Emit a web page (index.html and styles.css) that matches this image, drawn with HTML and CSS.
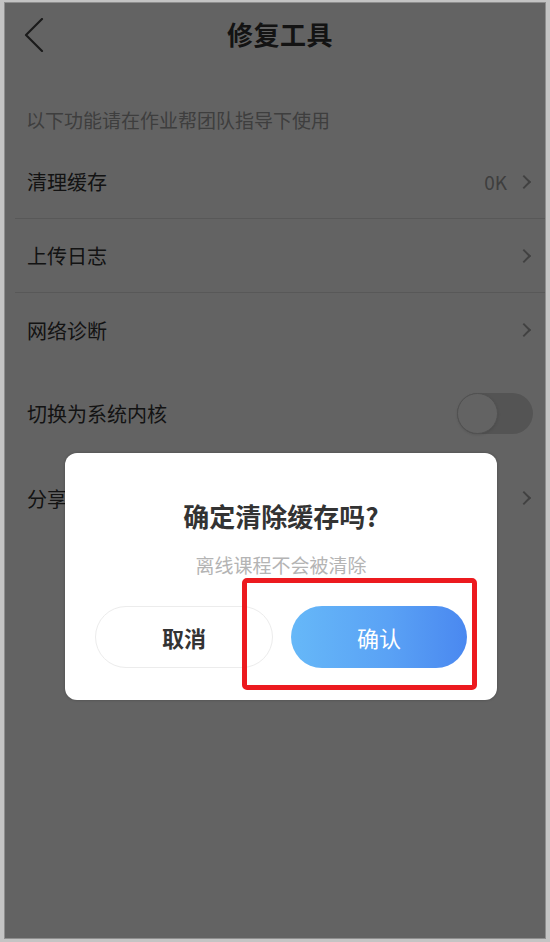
FILE: index.html
```html
<!DOCTYPE html>
<html lang="zh-CN">
<head>
<meta charset="utf-8">
<title>修复工具</title>
<link rel="stylesheet" href="styles.css">
</head>
<body>
<div class="device">
  <header class="nav">
    <svg class="back" width="20" height="34" viewBox="0 0 20 34" aria-hidden="true">
      <polyline points="18,1 2,17 18,33" fill="none" stroke="#444" stroke-width="2.2" stroke-linecap="round" stroke-linejoin="round"/>
    </svg>
    <h1 class="nav-title">修复工具</h1>
    <span></span>
  </header>

  <div class="hint">以下功能请在作业帮团队指导下使用</div>

  <ul class="group">
    <li class="row line">
      <span class="label">清理缓存</span>
      <span class="extra"><span class="value">0K</span><span class="chev"></span></span>
    </li>
    <li class="row line">
      <span class="label">上传日志</span>
      <span class="extra"><span class="chev"></span></span>
    </li>
    <li class="row">
      <span class="label">网络诊断</span>
      <span class="extra"><span class="chev"></span></span>
    </li>
  </ul>

  <ul class="group group2">
    <li class="row tall">
      <span class="label">切换为系统内核</span>
      <span class="switch"><span class="knob"></span></span>
    </li>
    <li class="row tall2">
      <span class="label">分享日志</span>
      <span class="extra"><span class="chev"></span></span>
    </li>
  </ul>

  <div class="mask"></div>

  <div class="dialog">
    <div class="d-title">确定清除缓存吗?</div>
    <div class="d-sub">离线课程不会被清除</div>
    <div class="d-actions">
      <button class="btn btn-cancel">取消</button>
      <button class="btn btn-ok">确认</button>
    </div>
    <div class="highlight"></div>
  </div>
</div>
</body>
</html>
```

FILE: styles.css
```css
* { box-sizing: border-box; }

html, body {
  margin: 0;
  padding: 0;
}

body {
  background: #c4c4c4;
  font-family: "Noto Sans CJK SC", "Noto Sans", "Liberation Sans", sans-serif;
  width: 550px;
  height: 942px;
  overflow: hidden;
}

.device {
  position: relative;
  margin: 2px 0 0 4px;
  width: 542px;
  height: 937px;
  background: #ffffff;
  border: 1px solid #8e8e8e;
  overflow: hidden;
}

/* ---------- nav ---------- */
.nav {
  height: 61px;
  display: grid;
  grid-template-columns: 60px 1fr 50px;
  align-items: center;
  background: #fff;
}

.back {
  display: block;
  margin-left: 19px;
  margin-top: 2px;
}

.nav-title {
  margin: 0;
  text-align: center;
  font-size: 26px;
  font-weight: 700;
  color: #333;
  letter-spacing: 0.5px;
}

/* ---------- hint ---------- */
.hint {
  height: 81px;
  padding: 44px 0 0 21px;
  font-size: 19px;
  line-height: 24px;
  color: #a0a0a0;
  background: #fff;
}

/* ---------- list ---------- */
.group {
  list-style: none;
  margin: 0;
  padding: 0;
}

.group2 {
  margin-top: 8px;
}

.row {
  height: 74px;
  margin-left: 10px;
  padding: 0 12px 0 12px;
  display: flex;
  align-items: center;
  justify-content: space-between;
}

.row.line {
  border-bottom: 1px solid #e2e2e2;
}

.row.tall {
  height: 76px;
}

.row.tall2 {
  height: 94px;
}

.label {
  font-size: 20px;
  color: #333;
}

.extra {
  display: flex;
  align-items: center;
  gap: 12px;
}

.value {
  font-size: 19px;
  color: #a0a0a0;
}

.chev {
  width: 10px;
  height: 10px;
  border-top: 2px solid #a8a8a8;
  border-right: 2px solid #a8a8a8;
  transform: rotate(45deg);
  margin-right: 4px;
}

.switch {
  width: 76px;
  height: 41px;
  border-radius: 21px;
  background: #d8d8d8;
  display: flex;
  align-items: center;
}

.knob {
  width: 41px;
  height: 41px;
  border-radius: 50%;
  background: #fff;
  border: 1px solid #d0d0d0;
  box-shadow: 0 1px 3px rgba(0, 0, 0, 0.12);
}

/* ---------- mask ---------- */
.mask {
  position: absolute;
  inset: 0;
  background: rgba(0, 0, 0, 0.61);
}

/* ---------- dialog ---------- */
.dialog {
  position: absolute;
  left: 60px;
  top: 450px;
  width: 432px;
  height: 247px;
  padding: 46px 30px 31px;
  background: #fff;
  border-radius: 12px;
  box-shadow: 0 0 3px rgba(0, 0, 0, 0.25);
  display: flex;
  flex-direction: column;
  align-items: center;
}

.d-title {
  font-size: 26px;
  line-height: 34px;
  font-weight: 700;
  color: #333;
}

.d-sub {
  margin-top: 18px;
  font-size: 19px;
  line-height: 28px;
  color: #b4b4b4;
}

.d-actions {
  margin-top: 27px;
  width: 100%;
  display: flex;
  gap: 18px;
}

.btn {
  flex: 1;
  height: 62px;
  border-radius: 31px;
  font-family: inherit;
  font-size: 22px;
  font-weight: 700;
  cursor: pointer;
}

.btn-cancel {
  background: #fff;
  border: 1px solid #ececec;
  color: #333;
}

.btn-ok {
  border: none;
  color: #fff;
  font-weight: 400;
  background: linear-gradient(90deg, #66b8f8 0%, #5aa2f5 55%, #4a88f0 100%);
}

.highlight {
  position: absolute;
  left: 177px;
  top: 125px;
  width: 235px;
  height: 112px;
  border: 5px solid #ec1a1f;
  border-radius: 5px;
  pointer-events: none;
}
```
